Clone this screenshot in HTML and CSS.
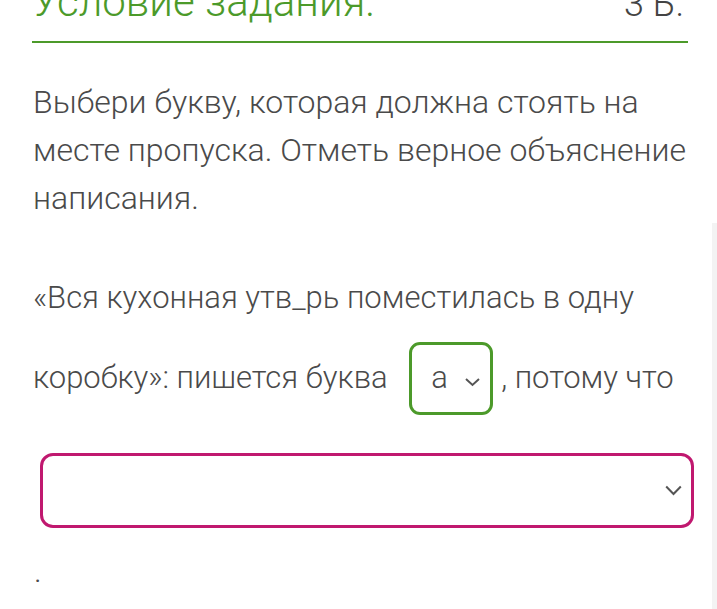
FILE: index.html
```html
<!DOCTYPE html>
<html lang="ru">
<head>
    <meta charset="UTF-8">
    <title>Условие задания</title>
    <link rel="stylesheet" href="styles.css">
</head>
<body>
    <div class="task">
        <div class="task-head">
            <h2 class="task-title">Условие задания:</h2>
            <span class="task-score">3 Б.</span>
        </div>
        <p class="task-text">Выбери букву, которая должна стоять на месте пропуска. Отметь верное объяснение написания.</p>
        <p class="task-sentence">«Вся кухонная утв_рь поместилась в одну коробку»: пишется буква <span class="pick pick-letter"><span class="pick-value">а</span><svg class="pick-arrow" width="17" height="10" viewBox="0 0 17 10"><path d="M2 2 L8.5 8 L15 2" fill="none" stroke="#555" stroke-width="2"/></svg></span>, потому что</p>
        <div class="pick pick-reason">
            <span class="pick-value"></span>
            <svg class="pick-arrow" width="17" height="11" viewBox="0 0 17 11"><path d="M1.2 1.5 L8.5 9 L15.8 1.5" fill="none" stroke="#555" stroke-width="2"/></svg>
        </div>
        <p class="task-end">.</p>
    </div>
    <div class="scroll-track"></div>
</body>
</html>
```
FILE: styles.css
```css
body {
    margin: 0;
    background-color: #fff;
    font-family: Roboto, "Noto Sans", sans-serif;
    font-weight: 300;
    color: #4a4a4a;
    overflow: hidden;
}
.task {
    width: 656px;
    margin-left: 32px;
}
.task-head {
    display: flex;
    justify-content: space-between;
    align-items: baseline;
    margin-top: -19px;
    padding-bottom: 19px;
    border-bottom: 2px solid #4c9a2a;
}
.task-title {
    margin: 0;
    font-size: 42px;
    font-weight: 300;
    line-height: 41px;
    color: #4c9a2a;
}
.task-score {
    font-size: 36px;
    line-height: 36px;
    color: #444;
    margin-right: 4px;
}
.task-text {
    margin: 35px 0 0 1px;
    font-size: 32px;
    line-height: 48px;
}
.task-sentence {
    margin: 36px 0 0 1px;
    font-size: 31px;
    line-height: 80px;
}
.pick {
    box-sizing: border-box;
    background-color: #fff;
}
.pick-letter {
    display: inline-block;
    width: 84px;
    height: 73px;
    margin: 0 8px 0 14px;
    padding: 0 0 0 19px;
    border: 3.5px solid #4c9a2a;
    border-radius: 11px;
    line-height: 66px;
}
.pick-letter .pick-arrow {
    margin-left: 16px;
    vertical-align: 1px;
}
.pick-reason {
    display: flex;
    align-items: center;
    justify-content: space-between;
    width: 654px;
    height: 75px;
    margin: 35px 0 0 8px;
    padding: 0 9px 0 20px;
    border: 3.5px solid #c0186f;
    border-radius: 13px;
}
.task-end {
    margin: 23px 0 0 2px;
    font-size: 32px;
    line-height: 40px;
}
.scroll-track {
    position: fixed;
    right: 0;
    top: 223px;
    bottom: 0;
    width: 5px;
    background-color: #f3f3f3;
}
```
